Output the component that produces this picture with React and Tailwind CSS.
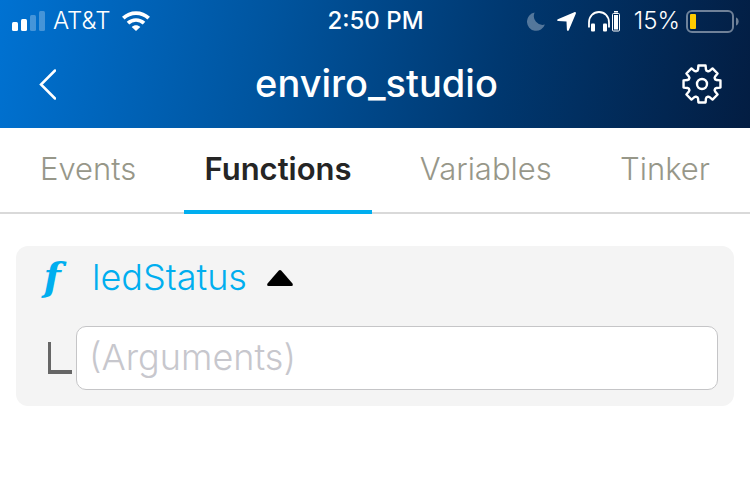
import { useState } from "react";

const TABS = ["Events", "Functions", "Variables", "Tinker"];

function SignalIcon() {
  return (
    <svg width="33" height="20" viewBox="0 0 33 20" fill="#fff" aria-hidden="true">
      <rect x="0" y="11" width="6" height="9" rx="1.5" />
      <rect x="9" y="8" width="6" height="12" rx="1.5" />
      <rect x="18" y="4" width="6" height="16" rx="1.5" opacity=".27" />
      <rect x="27" y="0" width="6" height="20" rx="1.5" opacity=".27" />
    </svg>
  );
}

function WifiIcon() {
  return (
    <svg width="28" height="20" viewBox="0 0 28 20" fill="none" stroke="#fff" strokeWidth="3.7" aria-hidden="true">
      <path d="M1.3 7.2C8.4.3 19.6.3 26.7 7.2" />
      <path d="M6 12.2c4.6-4.3 11.4-4.3 16 0" />
      <path d="M9.7 15.9c2.5-2.3 6.1-2.3 8.6 0L14 20z" fill="#fff" stroke="none" />
    </svg>
  );
}

function MoonIcon() {
  return (
    <svg width="18" height="19" viewBox="0 0 18 19" fill="#fff" fillOpacity=".33" aria-hidden="true">
      <path d="M7.6.6A9.2 9.2 0 1 0 17.9 12.6 8.8 8.8 0 0 1 7.6.6Z" />
    </svg>
  );
}

function LocationIcon() {
  return (
    <svg width="19" height="19" viewBox="0 0 19 19" fill="#fff" aria-hidden="true">
      <path d="M17.3.2.8 7.2C-.3 7.8 0 9 1.2 9.1L9.5 9.5 9.9 17.8C10 19 11.2 19.3 11.8 18.2L18.8 1.7C19.2.6 18.4-.2 17.3.2Z" />
    </svg>
  );
}

function HeadphonesIcon() {
  return (
    <svg width="32" height="21" viewBox="0 0 32 21" aria-hidden="true">
      <path d="M1 16.5v-5C1 5 5.5 1 11 1s10 4 10 10.500v5" fill="none" stroke="#fff" strokeWidth="1.800" />
      <rect x="3" y="12.5" width="4" height="8" rx="1" fill="#fff" />
      <rect x="15" y="12.5" width="4" height="8" rx="1" fill="#fff" />
      <rect x="24.5" y="2.5" width="7" height="17.5" rx="1" fill="none" stroke="#fff" />
      <rect x="26" y="4" width="4" height="14.5" fill="#fff" />
      <rect x="26" y="0" width="4" height="1.5" fill="#fff" />
    </svg>
  );
}

function BatteryIcon() {
  return (
    <svg width="53" height="23" viewBox="0 0 53 23" aria-hidden="true">
      <rect x="1" y="1" width="46" height="21" rx="5" fill="none" stroke="#fff" strokeOpacity=".43" strokeWidth="2" />
      <rect x="4" y="4" width="6" height="15" rx="1" fill="#ffcc00" />
      <path d="M50 7.500c3.500 1 3.500 7 0 8z" fill="#fff" fillOpacity=".43" />
    </svg>
  );
}

// One tooth as [degrees from its axis, radius] pairs, repeated around the wheel.
const TOOTH = [
  [-19, 14],
  [-15, 15.2],
  [-11, 18.8],
  [11, 18.8],
  [15, 15.2],
  [19, 14],
];

const GEAR_POINTS = Array.from({ length: 8 }, (_, i) =>
  TOOTH.map(([deg, r]) => {
    const a = ((i * 45 + deg) * Math.PI) / 180;
    return `${(r * Math.sin(a)).toFixed(2)},${(-r * Math.cos(a)).toFixed(2)}`;
  }).join(" ")
).join(" ");

function GearIcon() {
  return (
    <svg width="42" height="42" viewBox="-21 -21 42 42" fill="none" stroke="#fff" strokeWidth="2.400" strokeLinejoin="round" aria-hidden="true">
      <polygon points={GEAR_POINTS} />
      <circle r="5" />
    </svg>
  );
}

export default function App() {
  const [active, setActive] = useState("Functions");
  const [open, setOpen] = useState(true);

  return (
    <div className="min-h-screen bg-white font-['Inter',sans-serif]">
      <header className="bg-[linear-gradient(100deg,#0072d2_0%,#00549e_36%,#003870_66%,#031d42_100%)] text-white">
        <div className="grid h-[42px] grid-cols-[1fr_auto_1fr] items-center pl-3 pr-[11px] text-2xl">
          <div className="flex items-center gap-2">
            <SignalIcon />
            <span className="font-light">AT&amp;T</span>
            <span className="pl-1"><WifiIcon /></span>
          </div>
          <time className="font-medium">2:50 PM</time>
          <div className="flex items-center justify-end gap-3">
            <MoonIcon />
            <LocationIcon />
            <HeadphonesIcon />
            <div className="flex items-center gap-1.5 pl-0.5">
              <span className="font-light">15%</span>
              <BatteryIcon />
            </div>
          </div>
        </div>
        <div className="flex h-[86px] items-center justify-between pb-0.5 pl-7 pr-[27px]">
          <button type="button" aria-label="Back" className="flex w-11 items-center pl-2.5">
            <svg width="18" height="31" viewBox="0 0 18 31" fill="none" stroke="#fff" strokeWidth="2.500" strokeLinecap="round" aria-hidden="true">
              <path d="M17 1.500 3 15.500 17 29.500" />
            </svg>
          </button>
          <h1 className="pb-0.5 text-[38px] font-medium">enviro_studio</h1>
          <button type="button" aria-label="Settings">
            <GearIcon />
          </button>
        </div>
      </header>

      <nav role="tablist" className="flex h-[86px] justify-between border-b-2 border-[#d9d9d9] px-5">
        {TABS.map((tab) => (
          <button
            key={tab}
            type="button"
            role="tab"
            aria-selected={tab === active}
            onClick={() => setActive(tab)}
            className={
              tab === active
                ? "-mb-0.5 border-b-4 border-[#00aeef] px-5 text-[31px] font-semibold text-[#252525]"
                : "-mb-0.5 border-b-4 border-transparent px-5 text-[31px] font-light text-[#979789]"
            }
          >
            {tab}
          </button>
        ))}
      </nav>

      <main className="px-4 pt-8">
        <section className="rounded-xl bg-[#f4f4f4] px-4 pb-4">
          <button
            type="button"
            aria-expanded={open}
            onClick={() => setOpen(!open)}
            className="flex h-16 items-center text-[#00aeef]"
          >
            <span className="w-[60px] pl-1.5 text-left font-['DejaVu_Math_TeX_Gyre','Liberation_Serif',serif] text-[40px] leading-16">𝒇</span>
            <span className="pb-0.5 text-4xl font-light">ledStatus</span>
            <svg className="ml-5" width="26" height="16" viewBox="0 0 26 16" aria-hidden="true">
              <path d="M11.800.6q1.200-1 2.400 0L25.500 13.500Q26.500 16 24.500 16h-23Q-.5 16 .5 13.500Z" fill="#000" />
            </svg>
          </button>
          {open && (
            <div className="mt-4 flex items-center gap-1 pl-4">
              <span className="h-8 w-6 border-b-4 border-l-3 border-[#666]" />
              <input
                aria-label="Arguments"
                placeholder="(Arguments)"
                className="h-16 min-w-0 flex-1 rounded-[10px] border border-[#c5c5c7] bg-white px-3 pb-0.5 text-4xl font-light outline-none placeholder:text-[#c7c7cd]"
              />
            </div>
          )}
        </section>
      </main>
    </div>
  );
}
